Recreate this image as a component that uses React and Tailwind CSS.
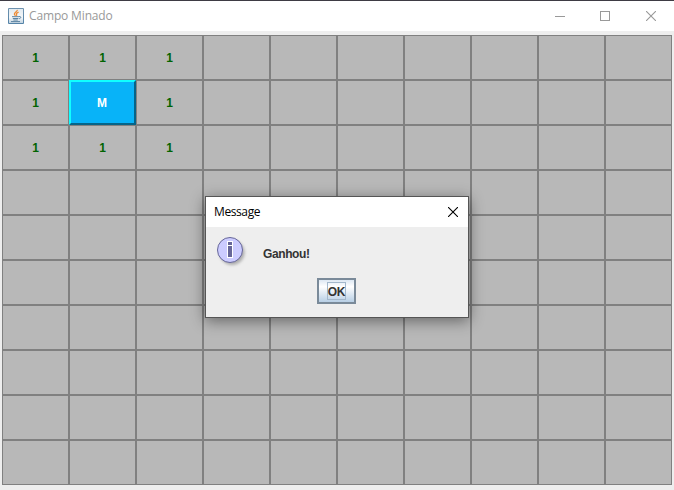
const COLS = 10;
const ROWS = 10;

const cells = Array.from({ length: COLS * ROWS }, (_, i) => {
  const row = Math.floor(i / COLS);
  const col = i % COLS;
  if (row === 1 && col === 1) return 'M';
  return row < 3 && col < 3 ? '1' : '';
});

function JavaIcon() {
  return (
    <svg width="16" height="16" viewBox="0 0 16 16" className="shrink-0">
      <defs>
        <linearGradient id="java-bg" x1="0" y1="0" x2="0" y2="1">
          <stop offset="0" stopColor="#6f93b0" />
          <stop offset="1" stopColor="#5483a8" />
        </linearGradient>
        <linearGradient id="java-face" x1="0" y1="0" x2="0" y2="1">
          <stop offset="0" stopColor="#e2eaf0" />
          <stop offset="0.6" stopColor="#f4f7f9" />
          <stop offset="1" stopColor="#c2d3e0" />
        </linearGradient>
      </defs>
      <rect width="16" height="16" rx="1" fill="url(#java-bg)" />
      <rect x="1" y="1" width="14" height="14" fill="url(#java-face)" />
      <path d="M9.3 1.8C9.6 3.6 6 4.3 6.4 6.1c.1.7.8 1.2 1 1.8M10.6 4.2C8.8 5 8 5.6 8.6 6.5c.4.6.1 1-.3 1.4" fill="none" stroke="#ee8b35" strokeWidth="1.3" />
      <path d="M4 8.7h7M4.8 10.5h5.6M5.4 12h4.4M3 13.6h9M11 8.6c2.4-.6 2.4 1.7.2 2.1" fill="none" stroke="#5b83a2" strokeWidth="1" />
    </svg>
  );
}

function InfoIcon() {
  return (
    <svg width="32" height="32" viewBox="0 0 32 32" className="shrink-0">
      <defs>
        <filter id="info-shadow" x="-30%" y="-30%" width="160%" height="160%">
          <feGaussianBlur stdDeviation="1.4" />
        </filter>
      </defs>
      <circle cx="15" cy="15.5" r="12.5" fill="#777" opacity="0.55" filter="url(#info-shadow)" />
      <circle cx="13" cy="13" r="12.5" fill="#ccccff" stroke="#666699" />
      <path d="M10 4h6v17h-6z" fill="#fff" />
      <path d="M11 5h4v3h-4zM11 9h4v11h-4z" fill="#666699" />
    </svg>
  );
}

function CloseGlyph({ color }) {
  return (
    <svg width="10" height="10" viewBox="0 0 10 10">
      <path d="M0 0L10 10M10 0L0 10" stroke={color} strokeWidth="1.1" />
    </svg>
  );
}

function Cell({ value }) {
  if (value === 'M') {
    return (
      <div className="flex items-center justify-center border-2 border-t-[#10ffff] border-l-[#10ffff] border-r-[#056489] border-b-[#056489] bg-[#08b3f8] text-white">
        <span className="-ml-px">M</span>
      </div>
    );
  }
  return (
    <div className="flex items-center justify-center border border-[#808080] bg-[#b8b8b8] text-[#006400]">
      {value}
    </div>
  );
}

function MessageDialog() {
  return (
    <div className="absolute top-[195px] left-[205px] flex h-[122px] w-[264px] flex-col border border-[#555] bg-[#eeeeee] shadow-[0_3px_14px_rgba(0,0,0,0.45)]">
      <div className="flex h-[30px] items-center justify-between bg-white pr-[10px] pl-2 text-black">
        <span className="font-['Open_Sans','Noto_Sans',sans-serif] text-[12px] tracking-[-0.4px]">Message</span>
        <CloseGlyph color="#000" />
      </div>
      <div className="flex h-[51px] gap-[14px] pt-[10px] pl-[11px]">
        <InfoIcon />
        <span className="mt-[9px] h-4 text-[12px] leading-4 font-bold tracking-[-0.4px] text-[#333]">Ganhou!</span>
      </div>
      <div className="ml-[111px] flex h-[26px] w-[39px] items-center justify-center border-2 border-[#7a8a99] bg-linear-to-b from-[#dde8f3] via-white via-30% to-[#b8cfe5]">
        <span className="flex h-[18px] w-[19px] items-center justify-center border border-[#a3b8cc] pt-0.5 text-[12px] leading-4 font-bold tracking-[-0.3px] text-[#333]">
          OK
        </span>
      </div>
    </div>
  );
}

export default function App() {
  return (
    <div className="relative flex h-[490px] w-[674px] flex-col overflow-hidden border-t border-[#3e3b44] bg-[#eeeeee] font-['Liberation_Sans',Arial,sans-serif]">
      <header className="flex h-[30px] shrink-0 items-center justify-between bg-white pr-[18px] pl-2 text-[#999]">
        <div className="flex items-center gap-[5px]">
          <JavaIcon />
          <span className="font-['Open_Sans','Noto_Sans',sans-serif] text-[12px] tracking-[-0.15px]">Campo Minado</span>
        </div>
        <div className="flex items-center">
          <div className="h-px w-[10px] bg-[#999]" />
          <div className="ml-[35px] h-[10px] w-[10px] border border-[#999]" />
          <div className="ml-9">
            <CloseGlyph color="#999" />
          </div>
        </div>
      </header>
      <main className="mx-[2px] mt-1 grid h-[450px] w-[670px] grid-cols-10 grid-rows-10 text-[12px] leading-4 font-bold">
        {cells.map((value, i) => (
          <Cell key={i} value={value} />
        ))}
      </main>
      <MessageDialog />
    </div>
  );
}
